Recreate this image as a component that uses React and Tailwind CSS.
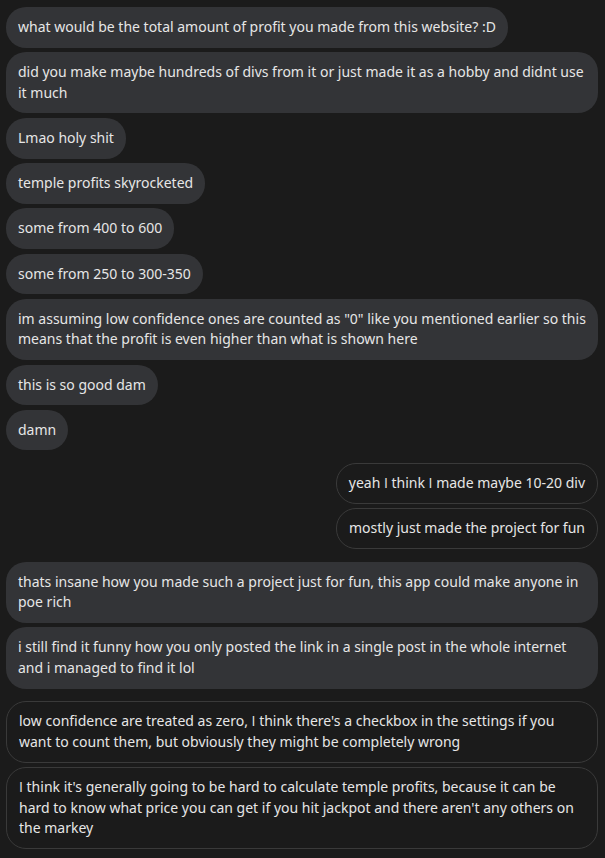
import React from "react";

const groups = [
  {
    me: false,
    msgs: [
      "what would be the total amount of profit you made from this website? :D",
      "did you make maybe hundreds of divs from it or just made it as a hobby and didnt use it much",
      "Lmao holy shit",
      "temple profits skyrocketed",
      "some from 400 to 600",
      "some from 250 to 300-350",
      'im assuming low confidence ones are counted as "0" like you mentioned earlier so this means that the profit is even higher than what is shown here',
      "this is so good dam",
      "damn",
    ],
  },
  {
    me: true,
    msgs: ["yeah I think I made maybe 10-20 div", "mostly just made the project for fun"],
  },
  {
    me: false,
    msgs: [
      "thats insane how you made such a project just for fun, this app could make anyone in poe rich",
      "i still find it funny how you only posted the link in a single post in the whole internet and i managed to find it lol",
    ],
  },
  {
    me: true,
    msgs: [
      "low confidence are treated as zero, I think there's a checkbox in the settings if you want to count them, but obviously they might be completely wrong",
      "I think it's generally going to be hard to calculate temple profits, because it can be hard to know what price you can get if you hit jackpot and there aren't any others on the markey",
    ],
  },
];

function Text({ s }) {
  const parts = s.split("I");
  return (
    <>
      {parts.map((p, i) => (
        <React.Fragment key={i}>
          {i > 0 && <span className="font-['Open_Sans']">I</span>}
          {p}
        </React.Fragment>
      ))}
    </>
  );
}

export default function App() {
  return (
    <div
      className="min-h-[858px] w-[605px] bg-[#1b1b1b] pl-[6px] pr-[7px] pt-[7px] pb-4 text-[14px] leading-[20.6px] text-[#e6e6e6]"
      style={{ fontFamily: '"Noto Sans", "Open Sans", sans-serif' }}
    >
      <div className="flex flex-col gap-[12.8px]">
        {groups.map((g, gi) => (
          <div key={gi} className="flex flex-col gap-[4.6px]">
            {g.msgs.map((m, mi) =>
              g.me ? (
                <div key={mi} className="flex justify-end">
                  <div className="max-w-full rounded-[20px] border border-[#3a3a3a] bg-[#1b1b1b] px-[12px] py-[9px]">
                    <Text s={m} />
                  </div>
                </div>
              ) : (
                <div key={mi} className="flex justify-start">
                  <div className="max-w-full rounded-[20px] bg-[#333437] px-[12px] py-[10px]">
                    <Text s={m} />
                  </div>
                </div>
              )
            )}
          </div>
        ))}
      </div>
    </div>
  );
}
